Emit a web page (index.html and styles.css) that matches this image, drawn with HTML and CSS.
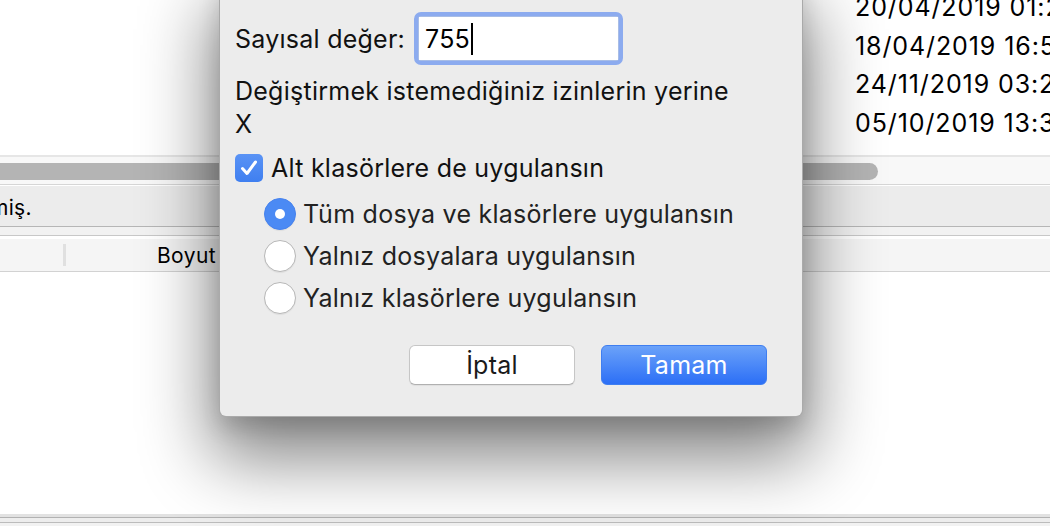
FILE: index.html
```html
<!DOCTYPE html>
<html lang="tr">
<head>
<meta charset="utf-8">
<link rel="stylesheet" href="styles.css">
</head>
<body>
<div class="window">
  <div class="files">
    <div class="dates">
      <div class="date">20/04/2019 01:2</div>
      <div class="date">18/04/2019 16:5</div>
      <div class="date">24/11/2019 03:2</div>
      <div class="date">05/10/2019 13:3</div>
    </div>
  </div>
  <div class="line-top"></div>
  <div class="hscroll"><div class="thumb"></div></div>
  <div class="status"><span class="status-text">miş.</span></div>
  <div class="gap"></div>
  <div class="header">
    <div class="col col-first"></div>
    <div class="col col-size">Boyut</div>
  </div>
  <div class="list"></div>
  <div class="bottom-lines">
    <div class="bl bl1"></div>
    <div class="bl bl2"></div>
    <div class="bl bl3"></div>
  </div>
</div>

<div class="dialog">
  <div class="row-value">
    <label class="label">Sayısal değer:</label>
    <div class="field"><div class="field-inner">755<span class="caret"></span></div></div>
  </div>
  <p class="note">Değiştirmek istemediğiniz izinlerin yerine<br>X</p>
  <div class="check-row">
    <span class="checkbox">
      <svg viewBox="0 0 28 28" width="28" height="28"><path d="M7.5 14.5 L12 19.5 L20.5 8" fill="none" stroke="#fff" stroke-width="3" stroke-linecap="round" stroke-linejoin="round"/></svg>
    </span>
    <span class="opt">Alt klasörlere de uygulansın</span>
  </div>
  <div class="radios">
    <div class="radio-row"><span class="radio on"><span class="dot"></span></span><span class="opt">Tüm dosya ve klasörlere uygulansın</span></div>
    <div class="radio-row"><span class="radio"></span><span class="opt">Yalnız dosyalara uygulansın</span></div>
    <div class="radio-row"><span class="radio"></span><span class="opt">Yalnız klasörlere uygulansın</span></div>
  </div>
  <div class="buttons">
    <button class="btn cancel">İptal</button>
    <button class="btn ok">Tamam</button>
  </div>
</div>
</body>
</html>
```
FILE: styles.css
```css
html, body {
  margin: 0;
  padding: 0;
}
body {
  width: 1050px;
  height: 526px;
  overflow: hidden;
  position: relative;
  background: #fff;
  font-family: Inter, "Noto Sans", "Liberation Sans", sans-serif;
  color: #000;
}
.window {
  display: flex;
  flex-direction: column;
  height: 526px;
}
.files {
  height: 155px;
  background: #fff;
  display: flex;
  justify-content: flex-end;
}
.dates {
  width: 195px;
  margin-top: -12px;
  font-size: 25px;
  letter-spacing: 0.9px;
  line-height: 38.5px;
  white-space: nowrap;
  overflow: hidden;
}
.line-top {
  height: 2px;
  background: #e6e6e6;
}
.hscroll {
  height: 28px;
  background: #f8f8f8;
  border-bottom: 1px solid #d6d6d6;
  display: flex;
  align-items: center;
  padding-top: 2px;
  box-sizing: border-box;
}
.thumb {
  width: 888px;
  margin-left: -10px;
  height: 17px;
  border-radius: 9px;
  background: #b4b4b4;
}
.status {
  height: 42px;
  background: #ececec;
  border-top: 1px solid #fff;
  border-bottom: 1px solid #b6b6b6;
  box-sizing: border-box;
  display: flex;
  align-items: center;
  font-size: 21px;
  letter-spacing: 0.3px;
}
.status-text {
  margin-left: -10px;
  padding-top: 2px;
}
.gap {
  height: 9px;
  background: #f2f2f2;
  border-bottom: 1px solid #c8c8c8;
  box-sizing: border-box;
}
.header {
  height: 36px;
  background: #f5f5f5;
  border-top: 3px solid #fff;
  border-bottom: 1px solid #d2d2d2;
  box-sizing: border-box;
  display: flex;
  align-items: center;
  font-size: 21px;
  letter-spacing: 0.4px;
}
.col-first {
  width: 63px;
  height: 22px;
  border-right: 3px solid #e0e0e0;
}
.col-size {
  width: 150px;
  text-align: right;
}
.list {
  flex: 1;
  background: #fff;
}
.bottom-lines {
  height: 12px;
  display: flex;
  flex-direction: column;
}
.bl1 { height: 3px; background: #e2e2e2; border-bottom: 1px solid #b2b2b2; }
.bl2 { height: 4px; background: #ededed; border-bottom: 1px solid #bcbcbc; }
.bl3 { flex: 1; background: #f2f2f2; }

/* Dialog */
.dialog {
  position: absolute;
  left: 219px;
  top: -20px;
  width: 584px;
  height: 437px;
  box-sizing: border-box;
  background: #ececec;
  border: 1px solid rgba(0,0,0,0.28);
  border-top: none;
  border-radius: 0 0 7px 7px;
  box-shadow: 0 34px 70px 8px rgba(0,0,0,0.48), 0 10px 22px rgba(0,0,0,0.14);
  padding: 32px 0 0 15px;
  font-size: 25px;
  letter-spacing: 0.25px;
  color: #111;
}
.row-value {
  display: flex;
  align-items: center;
  height: 53px;
}
.label {
  width: 179px;
  padding-top: 1px;
}
.field {
  width: 209px;
  height: 53px;
  box-sizing: border-box;
  border: 4px solid #8cabef;
  border-radius: 7px;
  padding: 1px;
  background: #a8bde6;
}
.field-inner {
  height: 100%;
  box-sizing: border-box;
  background: #fff;
  padding: 0 0 0 6px;
  display: flex;
  align-items: center;
  color: #000;
}
.caret {
  display: inline-block;
  width: 2px;
  height: 32px;
  background: #000;
  margin-left: 1px;
}
.note {
  margin: 10px 0 0 0;
  line-height: 33px;
}
.check-row {
  display: flex;
  align-items: center;
  margin-top: 12px;
  height: 30px;
}
.checkbox {
  width: 28px;
  height: 28px;
  border-radius: 5px;
  background: linear-gradient(#5a93f5, #3f7ff0);
  display: flex;
  margin-right: 8px;
}
.radios {
  display: flex;
  flex-direction: column;
  margin-top: 10px;
  padding-left: 29px;
  color: #222;
}
.radio-row {
  display: flex;
  align-items: center;
  height: 42px;
}
.radio {
  width: 32px;
  height: 32px;
  box-sizing: border-box;
  border-radius: 50%;
  background: #fff;
  border: 1px solid #b7b7b7;
  box-shadow: 0 1px 1px rgba(0,0,0,0.06);
  margin-right: 7px;
  display: flex;
  align-items: center;
  justify-content: center;
}
.radio.on {
  background: #4b8af4;
  border-color: #4682ee;
}
.dot {
  width: 10px;
  height: 10px;
  border-radius: 50%;
  background: #fff;
}
.buttons {
  display: flex;
  gap: 26px;
  margin-top: 26px;
  padding-left: 174px;
}
.btn {
  width: 166px;
  height: 40px;
  border-radius: 6px;
  font-family: inherit;
  font-size: 25px;
  letter-spacing: 0.25px;
  padding: 0;
  box-sizing: border-box;
}
.cancel {
  background: #fff;
  border: 1px solid #c6c6c6;
  border-bottom-color: #b0b0b0;
  color: #1a1a1a;
  box-shadow: 0 1px 1px rgba(0,0,0,0.06);
}
.ok {
  background: linear-gradient(#6ba2f9, #2c6ff6);
  border: 1px solid #3f7ef0;
  color: #fff;
}
```
